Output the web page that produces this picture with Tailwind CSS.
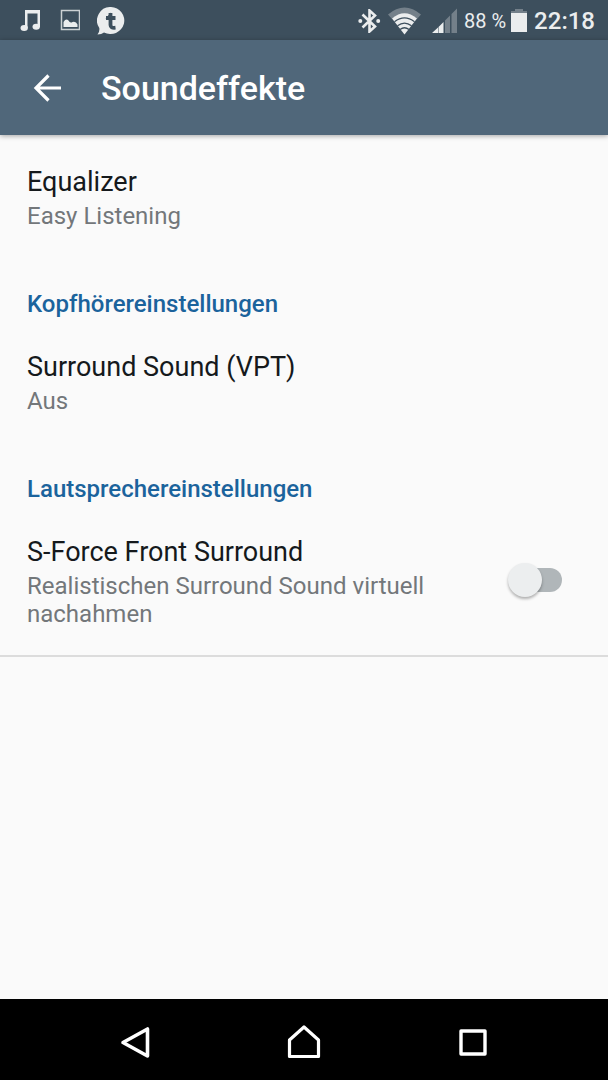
<!DOCTYPE html>
<html lang="de">
<head>
<meta charset="utf-8">
<meta name="viewport" content="width=device-width, initial-scale=1">
<title>Soundeffekte</title>
<script src="https://cdn.jsdelivr.net/npm/@tailwindcss/browser@4"></script>
</head>
<body class="flex min-h-screen flex-col bg-[#fafafa] font-['Roboto',sans-serif] text-[#15191c]">
  <div class="flex h-10 items-center justify-between bg-[#3d4f5d] pt-px pr-[13px] pl-5 text-[#ebedee]">
    <div class="flex items-center gap-5">
      <svg class="h-6 w-5" viewBox="0 0 20 24" fill="currentColor" aria-label="Musik">
        <path d="M5 1H20V18H17.500V4.500H7.500V19H5Z"/>
        <ellipse cx="4.200" cy="19" rx="3.700" ry="3"/><ellipse cx="16.200" cy="17.800" rx="3.700" ry="3"/>
      </svg>
      <svg class="h-6 w-5" viewBox="0 0 20 24" aria-label="Bild">
        <rect x="1.500" y="1.500" width="18" height="19" fill="none" stroke="#ccd1d4" stroke-width="1.500"/>
        <path d="M3.500 18V13Q6 9 8.500 11.500Q10 14.500 12.500 13Q16 12 17.500 15.500V18Z" fill="currentColor"/>
      </svg>
      <svg class="-ml-[3px] h-7 w-7" viewBox="0 0 28 28" aria-label="Nachricht">
        <path d="M14 0A13.800 13.500 0 1 1 7 25.400Q4.500 27.500.5 27.500Q2.800 25 2.300 21A13.500 13.500 0 0 1 14 0Z" fill="currentColor"/>
        <path d="M13.500 6V18Q13.500 21.300 18.500 20.700M9 11H18.500" fill="none" stroke="#3d4f5d" stroke-width="3.800"/>
        <path d="M8.500 11.500L14 5.500V11.500Z" fill="#3d4f5d"/>
      </svg>
    </div>
    <div class="flex items-center">
      <svg class="h-6 w-6" viewBox="0 0 24 24" fill="none" stroke="currentColor" stroke-width="2.600" aria-label="Bluetooth">
        <path d="M4.500 5.500L17 17.500L11.500 22.500V1.500L17 6.500L4.500 18.500"/>
        <circle cx="2.300" cy="12" r="2" fill="currentColor" stroke="none"/><circle cx="20.200" cy="12" r="2" fill="currentColor" stroke="none"/>
      </svg>
      <svg class="ml-[5px] h-7 w-9" viewBox="0 0 36 28" fill="none" aria-label="WLAN">
        <path d="M1 7.500Q17.500 -6.500 34 7.500L30 12Q17.500 2 5 12Z" fill="#74808a"/>
        <path d="M5 11.500Q17.500 1 30 11.500L17.500 27.500Z" fill="currentColor"/>
        <path d="M7.500 14.800Q17.500 7 27.500 14.800M10.500 18.800Q17.500 13.500 24.500 18.800M13 22.500Q17.500 19 22 22.500" stroke="#3d4f5d" stroke-width="1.300"/>
      </svg>
      <svg class="ml-2 h-7 w-7" viewBox="0 0 28 28" aria-label="Mobilfunk">
        <path d="M1 26L7 20.500V26ZM7.500 20L12.500 15V26H7.500Z" fill="currentColor"/>
        <path d="M14 13.500L19 8.500V26H14ZM20.500 7L26 1.500V26H20.500Z" fill="#74808a"/>
      </svg>
      <span class="ml-[5px] text-[20px] leading-6">88 %</span>
      <svg class="ml-1 h-6 w-5" viewBox="0 0 20 24" aria-label="Akku">
        <path d="M5 0H13V2H17V5H1V2H5Z" fill="#74808a"/><path d="M1 4H17V23H1Z" fill="currentColor"/>
      </svg>
      <span class="ml-1 text-[24px] leading-6 font-medium">22:18</span>
    </div>
  </div>

  <header class="z-10 flex h-[95px] items-center bg-[#50677a] px-7 text-white shadow-[0_1px_5px_rgba(0,0,0,0.35)]">
    <button class="mr-[33px]" aria-label="Zurück">
      <svg class="h-10 w-10" viewBox="0 0 40 40" fill="none" stroke="currentColor" stroke-width="3.200"><path d="M33 20H8M20.500 7.500L8 20L20.500 32.500"/></svg>
    </button>
    <h1 class="text-[34px] leading-10 font-medium">Soundeffekte</h1>
  </header>

  <main class="flex-1">
    <button class="block w-full px-[27px] pt-[31px] text-left">
      <span class="block text-[27px] leading-8">Equalizer</span>
      <span class="mt-1 block text-[24px] leading-7 text-[#73777a]">Easy Listening</span>
    </button>
    <h2 class="mt-[60px] px-[27px] text-[24px] leading-7 font-medium text-[#1b639c]">Kopfhörereinstellungen</h2>
    <button class="mt-[33px] block w-full px-[27px] text-left">
      <span class="block text-[27px] leading-8">Surround Sound (VPT)</span>
      <span class="mt-1 block text-[24px] leading-7 text-[#73777a]">Aus</span>
    </button>
    <h2 class="mt-[60px] px-[27px] text-[24px] leading-7 font-medium text-[#1b639c]">Lautsprechereinstellungen</h2>
    <div class="mt-[6px] flex items-center justify-between border-b-2 border-[#dcdcdc] px-[27px] py-[27px]">
      <label for="sforce" class="max-w-[420px]">
        <span class="block text-[27px] leading-8">S-Force Front Surround</span>
        <span class="mt-1 block text-[24px] leading-7 text-[#73777a]">Realistischen Surround Sound virtuell nachahmen</span>
      </label>
      <input id="sforce" type="checkbox" role="switch" class="relative mr-[19px] mb-1 h-6 w-[50px] shrink-0 appearance-none rounded-full bg-[#b0b6b9] before:absolute before:-top-[5px] before:-left-1 before:size-[34px] before:rounded-full before:bg-[#eceeef] before:shadow-[0_2px_3px_rgba(0,0,0,0.3)] before:content-[''] checked:before:left-5">
    </div>
  </main>

  <nav class="grid h-[81px] grid-cols-3 items-center justify-items-center bg-black px-[50px] pt-[5px] text-white">
    <button aria-label="Zurück"><svg class="h-9 w-9" viewBox="0 0 36 36" fill="none" stroke="currentColor" stroke-width="3.600" stroke-linejoin="round"><path d="M30.500 5V32L6 18.500Z"/></svg></button>
    <button aria-label="Startseite"><svg class="h-9 w-9" viewBox="0 0 36 36" fill="none" stroke="currentColor" stroke-width="3.200" stroke-linejoin="round"><path d="M18 3L32.500 16V32.500H3.500V16Z"/></svg></button>
    <button aria-label="Übersicht"><svg class="h-9 w-9" viewBox="0 0 36 36" fill="none" stroke="currentColor" stroke-width="3.400" stroke-linejoin="round"><path d="M6 7H30V30H6Z"/></svg></button>
  </nav>
</body>
</html>
